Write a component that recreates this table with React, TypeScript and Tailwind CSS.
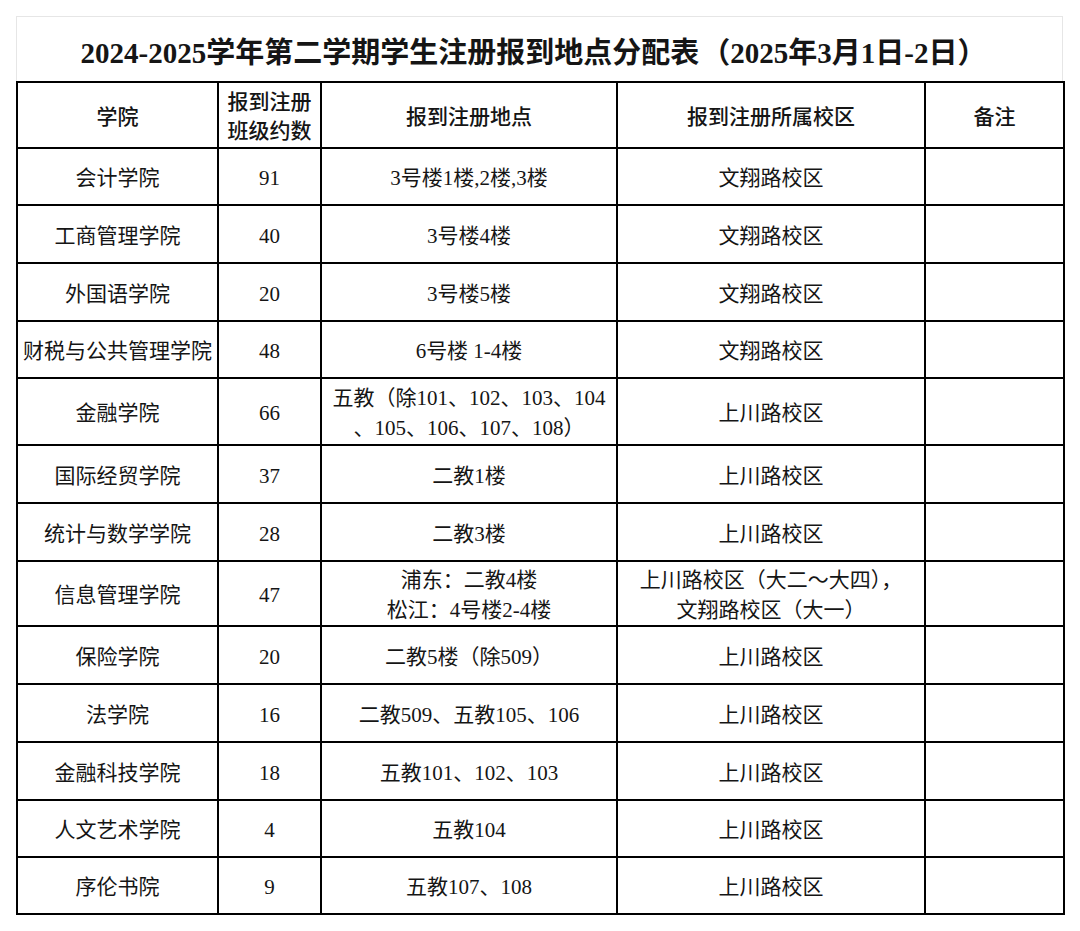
import React from 'react';

type Row = {
  college: string;
  count: string;
  place: React.ReactNode;
  campus: React.ReactNode;
  h: string;
};

const rows: Row[] = [
  { college: '会计学院', count: '91', place: '3号楼1楼,2楼,3楼', campus: '文翔路校区', h: 'h-[57px]' },
  { college: '工商管理学院', count: '40', place: '3号楼4楼', campus: '文翔路校区', h: 'h-[58px]' },
  { college: '外国语学院', count: '20', place: '3号楼5楼', campus: '文翔路校区', h: 'h-[58px]' },
  { college: '财税与公共管理学院', count: '48', place: '6号楼 1-4楼', campus: '文翔路校区', h: 'h-[57px]' },
  {
    college: '金融学院',
    count: '66',
    place: (
      <>
        五教（除101、102、103、104
        <br />
        、105、106、107、108）
      </>
    ),
    campus: '上川路校区',
    h: 'h-[67px]',
  },
  { college: '国际经贸学院', count: '37', place: '二教1楼', campus: '上川路校区', h: 'h-[58px]' },
  { college: '统计与数学学院', count: '28', place: '二教3楼', campus: '上川路校区', h: 'h-[58px]' },
  {
    college: '信息管理学院',
    count: '47',
    place: (
      <>
        浦东：二教4楼
        <br />
        松江：4号楼2-4楼
      </>
    ),
    campus: (
      <>
        上川路校区（大二～大四），
        <br />
        文翔路校区（大一）
      </>
    ),
    h: 'h-[65px]',
  },
  { college: '保险学院', count: '20', place: '二教5楼（除509）', campus: '上川路校区', h: 'h-[58px]' },
  { college: '法学院', count: '16', place: '二教509、五教105、106', campus: '上川路校区', h: 'h-[58px]' },
  { college: '金融科技学院', count: '18', place: '五教101、102、103', campus: '上川路校区', h: 'h-[58px]' },
  { college: '人文艺术学院', count: '4', place: '五教104', campus: '上川路校区', h: 'h-[57px]' },
  { college: '序伦书院', count: '9', place: '五教107、108', campus: '上川路校区', h: 'h-[57px]' },
];

const font = "font-['Liberation_Serif','Noto_Sans_CJK_SC',serif]";
const cell = 'border-2 border-black pt-[3px]';

export default function App() {
  return (
    <div className={`min-h-[931px] bg-white pt-[16px] pl-[16px] text-[#151515] ${font}`}>
      <div className="w-[1047px]">
        <div className="flex h-[65px] items-center justify-center border border-b-0 border-[#e6e6e6] pt-[10px] pr-[12px] text-[29px] font-bold">
          2024-2025学年第二学期学生注册报到地点分配表<span className="ml-[2px]">（2025年3月1日-2日）</span>
        </div>
        <table className="w-[1047px] table-fixed border-collapse border-2 border-black text-center text-[21px] leading-[30px]">
          <colgroup>
            <col className="w-[201px]" />
            <col className="w-[103px]" />
            <col className="w-[296px]" />
            <col className="w-[308px]" />
            <col className="w-[139px]" />
          </colgroup>
          <thead>
            <tr>
              <th className={`h-[66px] ${cell} font-medium`}>学院</th>
              <th className={`${cell} font-medium leading-[29px]`}>
                报到注册
                <br />
                班级约数
              </th>
              <th className={`${cell} font-medium`}>报到注册地点</th>
              <th className={`${cell} font-medium`}>报到注册所属校区</th>
              <th className={`${cell} font-medium`}>备注</th>
            </tr>
          </thead>
          <tbody>
            {rows.map((r) => (
              <tr key={r.college}>
                <td className={`${r.h} ${cell} whitespace-nowrap`}>{r.college}</td>
                <td className={cell}>{r.count}</td>
                <td className={`${cell} whitespace-nowrap`}>{r.place}</td>
                <td className={`${cell} whitespace-nowrap`}>{r.campus}</td>
                <td className={cell}></td>
              </tr>
            ))}
          </tbody>
        </table>
      </div>
    </div>
  );
}
